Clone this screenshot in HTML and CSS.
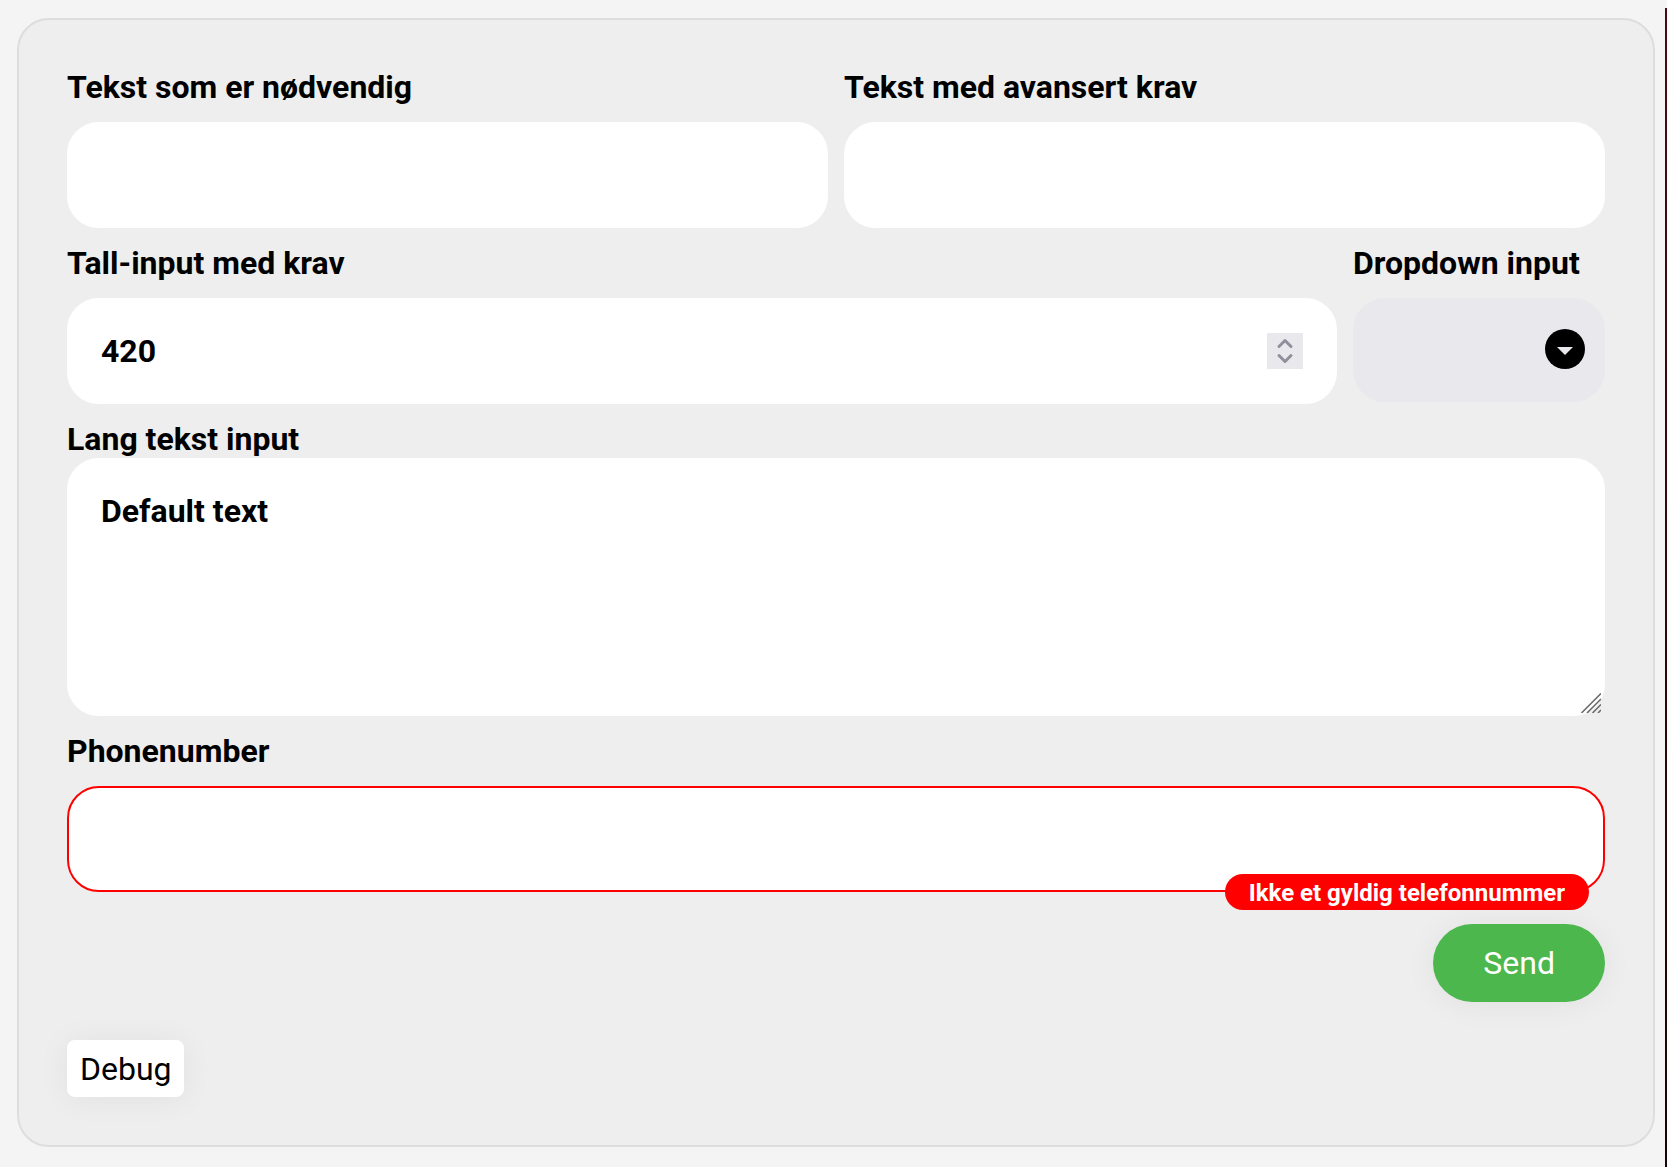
FILE: index.html
```html
<!DOCTYPE html>
<html lang="nb">
<head>
<meta charset="utf-8">
<title>Skjema</title>
<link rel="stylesheet" href="styles.css">
</head>
<body>
<main class="page">
  <form class="panel" novalidate>
    <div class="row">
      <div class="field">
        <label for="required">Tekst som er nødvendig</label>
        <input class="control" id="required" type="text">
      </div>
      <div class="field">
        <label for="advanced">Tekst med avansert krav</label>
        <input class="control" id="advanced" type="text">
      </div>
    </div>
    <div class="row">
      <div class="field">
        <label for="number">Tall-input med krav</label>
        <div class="holder">
          <input class="control" id="number" type="number" value="420">
          <svg class="spinner" viewBox="0 0 36 36" aria-hidden="true">
            <path d="M12 13.5l6-6 6 6M12 22.5l6 6 6-6"/>
          </svg>
        </div>
      </div>
      <div class="field field-small">
        <label for="dropdown">Dropdown input</label>
        <div class="holder">
          <select class="control select" id="dropdown"><option></option></select>
          <svg class="arrow" viewBox="0 0 40 40" aria-hidden="true">
            <circle cx="20" cy="20" r="20"/>
            <path d="M12 18h16l-8 8z"/>
          </svg>
        </div>
      </div>
    </div>
    <div class="field field-tight">
      <label for="long">Lang tekst input</label>
      <div class="holder">
        <textarea class="control textarea" id="long">Default text</textarea>
        <svg class="grip" viewBox="0 0 20 20" aria-hidden="true">
          <path d="M0.5 20L20 0.5M6 20L20 6M11.500 20L20 11.500M17 20L20 17"/>
        </svg>
      </div>
    </div>
    <div class="field">
      <label for="phone">Phonenumber</label>
      <div class="holder">
        <input class="control control-error" id="phone" type="tel" aria-describedby="phone-error">
        <span class="error" id="phone-error">Ikke et gyldig telefonnummer</span>
      </div>
    </div>
    <button class="send" type="submit">Send</button>
    <button class="debug" type="button">Debug</button>
  </form>
</main>
<div class="edge"></div>
</body>
</html>
```
FILE: styles.css
```css
* {
  box-sizing: border-box;
}

body {
  margin: 0;
  min-height: 100vh;
  display: flex;
  background: #f4f4f4;
  color: #000;
  font: 400 32px/38px Roboto, "Liberation Sans", sans-serif;
}

.page {
  flex: 1;
  min-width: 0;
  padding: 18px 10px 20px 17px;
}

.edge {
  width: 2px;
  margin-top: 8px;
  background: linear-gradient(#480a12, #180406);
}

.panel {
  display: flex;
  flex-direction: column;
  gap: 16px;
  padding: 48px;
  border: 2px solid #ddd;
  border-radius: 32px;
  background: #eee;
}

.row {
  display: flex;
  gap: 16px;
}

.field {
  flex: 1;
  min-width: 0;
  display: flex;
  flex-direction: column;
  gap: 16px;
  font-weight: 700;
}

.field-small {
  flex: 0 0 252px;
}

.field-tight {
  gap: 0;
}

.holder {
  position: relative;
  display: flex;
}

.control {
  width: 100%;
  height: 106px;
  margin: 0;
  padding: 32px;
  border: 2px solid #fff;
  border-radius: 32px;
  outline: 0;
  background: #fff;
  color: inherit;
  font: inherit;
  appearance: none;
}

.control[type="number"] {
  appearance: textfield;
}

.control::-webkit-inner-spin-button {
  appearance: none;
  margin: 0;
}

.select {
  height: 104px;
  border-color: #e9e9ed;
  background: #e9e9ed;
}

.textarea {
  height: 258px;
  resize: none;
}

.control-error {
  border-color: #f00;
}

.spinner {
  position: absolute;
  top: 35px;
  right: 34px;
  width: 36px;
  height: 36px;
  background: #e9e9ed;
  fill: none;
  stroke: #8f8f9d;
  stroke-width: 3;
  stroke-linecap: round;
  stroke-linejoin: round;
  pointer-events: none;
}

.arrow {
  position: absolute;
  top: 31px;
  right: 20px;
  width: 40px;
  height: 40px;
  pointer-events: none;
}

.arrow path {
  fill: #e9e9ed;
}

.grip {
  position: absolute;
  right: 4px;
  bottom: 3px;
  width: 20px;
  height: 20px;
  fill: none;
  stroke: #666;
  stroke-width: 1.5;
  pointer-events: none;
}

.error {
  position: absolute;
  right: 16px;
  bottom: -18px;
  padding: 5px 24px 3px;
  border-radius: 18px;
  background: #f00;
  color: #fff;
  font-size: 24px;
  line-height: 28px;
}

.send,
.debug {
  border: 0;
  font: inherit;
  box-shadow: 0 2px 32px rgba(0, 0, 0, 0.06);
}

.send {
  align-self: flex-end;
  margin-top: 16px;
  padding: 20px 50px;
  border-radius: 39px;
  background: #4bb74d;
  color: #fff;
}

.debug {
  align-self: flex-start;
  margin-top: 22px;
  padding: 10px 12px 9px 13px;
  border-radius: 8px;
  background: #fff;
  color: #000;
}
```
